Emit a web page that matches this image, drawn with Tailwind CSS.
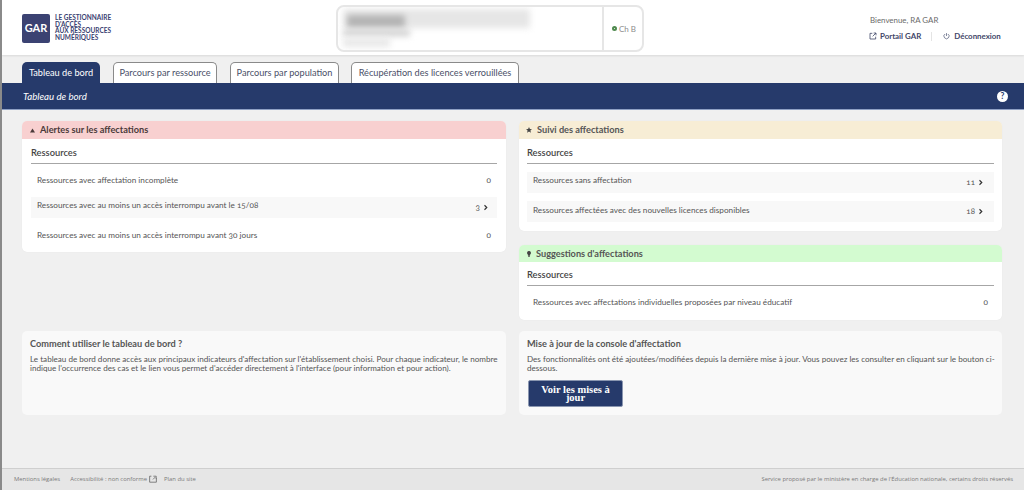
<!DOCTYPE html>
<html lang="fr">
<head>
    <meta charset="UTF-8">
    <title>Tableau de bord</title>
    <script src="https://cdn.jsdelivr.net/npm/@tailwindcss/browser@4"></script>
</head>
<body class="bg-[#f0f0f0] font-['Lato','Liberation_Sans',sans-serif] text-[#555] text-[8.2px] overflow-hidden">
<div class="h-[490px] flex flex-col border-l-2 border-[#8a8a8a] overflow-hidden">

    <!-- header -->
    <header class="h-[55px] shrink-0 bg-white flex items-start shadow-[0_1px_2px_rgba(0,0,0,0.1)] relative">
        <div class="w-[334px] shrink-0 pl-[20px] pt-[14px] flex items-start gap-[5px]">
            <div class="w-[28px] h-[29px] bg-[#3b4272] rounded-[2px] text-white text-[11px] font-bold flex items-center justify-center">GAR</div>
            <div class="text-[#3b4272] text-[6.5px] font-bold leading-[6.6px] pt-[1px]">LE GESTIONNAIRE<br>D'ACCÈS<br>AUX RESSOURCES<br>NUMÉRIQUES</div>
        </div>
        <div class="mt-[5px] w-[308px] h-[47px] border-2 border-[#e6e6e6] rounded-[8px] flex overflow-hidden">
            <div class="flex-1 relative overflow-hidden pl-[5px] pt-[2px]">
                <div class="w-[187px] h-[19px] bg-[#e6e6e6] blur-[3px] pl-[4px] pt-[6px]">
                    <div class="w-[58px] h-[13px] bg-[#b4b4b4]"></div>
                </div>
                <div class="w-[67px] h-[6px] mt-[2px] bg-[#cdcdcd] blur-[3px]"></div>
                <div class="w-[47px] h-[9px] mt-[2px] bg-[#e8e8e8] blur-[3px]"></div>
            </div>
            <div class="w-[40px] border-l-2 border-[#e6e6e6] flex items-center pl-[8px] gap-[2px] text-[#8c8c8c] text-[8px]">
                <span class="w-[5px] h-[5px] rounded-full border-2 border-[#4f8a4f]"></span>Ch B
            </div>
        </div>
        <div class="absolute left-[867px] top-[14px] w-[150px]">
            <div class="text-[#6a6a6a] text-[7.9px] leading-[12px] ml-[1px]">Bienvenue, RA GAR</div>
            <div class="mt-[4px] flex items-center text-[#3f4668] text-[7.9px] font-bold leading-[12px] whitespace-nowrap">
                <svg class="w-[8px] h-[8px] mr-[3px]" viewBox="0 0 12 12" fill="none" stroke="#3f4668" stroke-width="1.2"><path d="M5 2H1.5v8.5H10V7M7 1.5h3.5V5M10.5 1.5L5.5 6.5"/></svg>
                <span>Portail GAR</span>
                <span class="w-px h-[9px] bg-[#e4e4e4] ml-[10px] mr-[11px]"></span>
                <svg class="w-[7px] h-[8px] mr-[4px]" viewBox="0 0 12 12" fill="none" stroke="#3f4668" stroke-width="1.1"><path d="M3.5 2.6a4.4 4.4 0 1 0 5 0M6 1v5"/></svg>
                <span>Déconnexion</span>
            </div>
        </div>
    </header>

    <!-- tabs -->
    <nav class="h-[28px] shrink-0 flex items-end pl-[20px] gap-[13px] text-[9.2px] whitespace-nowrap">
        <a class="h-[21px] w-[78px] bg-[#263a6b] text-white rounded-t-[5px] flex items-center justify-center">Tableau de bord</a>
        <a class="h-[21px] w-[104px] bg-white text-[#4a5068] border border-b-0 border-[#8a8a8a] rounded-t-[5px] flex items-center justify-center">Parcours par ressource</a>
        <a class="h-[21px] w-[109px] bg-white text-[#4a5068] border border-b-0 border-[#8a8a8a] rounded-t-[5px] flex items-center justify-center">Parcours par population</a>
        <a class="h-[21px] w-[168px] -ml-px bg-white text-[#4a5068] border border-b-0 border-[#8a8a8a] rounded-t-[5px] flex items-center justify-center">Récupération des licences verrouillées</a>
    </nav>

    <!-- title bar -->
    <div class="h-[27px] shrink-0 bg-[#263a6b] border-b border-[#8fa0c4] flex items-center justify-between pl-[21px] pr-[16px] text-white text-[9.7px] italic">
        <span>Tableau de bord</span>
        <span class="w-[11px] h-[11px] rounded-full bg-white text-[#263a6b] text-[8.5px] not-italic font-bold flex items-center justify-center">?</span>
    </div>

    <!-- content -->
    <main class="flex-1 px-[20px] pt-[11px] grid grid-cols-[484px_483px] gap-x-[13px] content-start">
        <div class="h-[210px]">
            <section class="bg-white rounded-[5px] overflow-hidden shadow-[0_0_1px_rgba(0,0,0,0.08)]">
                <h2 class="h-[18px] bg-[#f8d0d0] flex items-center pl-[8px] gap-[5px] text-[9.2px] font-bold text-[#4a3a3a]">
                    <svg class="w-[5px] h-[5px]" viewBox="0 0 6 6" fill="#4a3a3a"><path d="M3 .5L6 5.5H0z"/></svg>Alertes sur les affectations
                </h2>
                <div class="px-[9px] pb-[4px]">
                    <h3 class="h-[25px] pt-[3px] border-b border-[#a6a6a6] flex items-center text-[9.3px] font-semibold text-[#444]">Ressources</h3>
                    <div class="mt-[8px] h-[21px] flex items-start justify-between pt-[2px] px-[6px]"><span>Ressources avec affectation incomplète</span><span class="oldstyle-nums">0</span></div>
                    <div class="mt-[4px] h-[21px] bg-[#f8f8f8] flex items-start justify-between pt-[2px] pl-[6px] pr-[8px]"><span class="oldstyle-nums">Ressources avec au moins un accès interrompu avant le 15/08</span><span class="oldstyle-nums flex items-center gap-[3px] pt-[2px]">3<svg class="w-[6px] h-[7px]" viewBox="0 0 8 8" fill="none" stroke="#333" stroke-width="1.6"><path d="M2 1l3 3-3 3"/></svg></span></div>
                    <div class="mt-[9px] h-[21px] flex items-start justify-between pt-[2px] px-[6px]"><span class="oldstyle-nums">Ressources avec au moins un accès interrompu avant 30 jours</span><span class="oldstyle-nums">0</span></div>
                </div>
            </section>
        </div>

        <div class="h-[210px]">
            <section class="bg-white rounded-[5px] overflow-hidden shadow-[0_0_1px_rgba(0,0,0,0.08)]">
                <h2 class="h-[18px] bg-[#f7edd5] flex items-center pl-[7px] gap-[5px] text-[9.2px] font-bold">
                    <svg class="w-[6px] h-[6px]" viewBox="0 0 10 10" fill="#444"><path d="M5 0l1.5 3.4 3.5.3-2.7 2.3.9 3.6L5 7.7 1.8 9.6l.9-3.6L0 3.7l3.5-.3z"/></svg>Suivi des affectations
                </h2>
                <div class="px-[8px] pb-[9px]">
                    <h3 class="h-[25px] pt-[3px] border-b border-[#a6a6a6] flex items-center text-[9.3px] font-semibold text-[#444]">Ressources</h3>
                    <div class="mt-[8px] h-[21px] bg-[#f8f8f8] flex items-start justify-between pt-[2px] pl-[6px] pr-[10px]"><span>Ressources sans affectation</span><span class="oldstyle-nums flex items-center gap-[3px] pt-[2px] text-[8px]">11<svg class="w-[6px] h-[7px]" viewBox="0 0 8 8" fill="none" stroke="#333" stroke-width="1.6"><path d="M2 1l3 3-3 3"/></svg></span></div>
                    <div class="mt-[8px] h-[21px] bg-[#f8f8f8] flex items-start justify-between pt-[3px] pl-[6px] pr-[10px]"><span>Ressources affectées avec des nouvelles licences disponibles</span><span class="oldstyle-nums flex items-center gap-[3px] pt-[1px] text-[8px]">18<svg class="w-[6px] h-[7px]" viewBox="0 0 8 8" fill="none" stroke="#333" stroke-width="1.6"><path d="M2 1l3 3-3 3"/></svg></span></div>
                </div>
            </section>
            <section class="mt-[14px] bg-white rounded-[5px] overflow-hidden shadow-[0_0_1px_rgba(0,0,0,0.08)]">
                <h2 class="h-[17px] bg-[#d3fbd0] flex items-center pl-[8px] gap-[5px] text-[9.2px] font-bold">
                    <svg class="w-[4px] h-[6px]" viewBox="0 0 6 9" fill="#444"><path d="M3 0a3 3 0 0 1 1.6 5.5V7h-3.2V5.5A3 3 0 0 1 3 0zM2 7.6h2V9H2z"/></svg>Suggestions d'affectations
                </h2>
                <div class="px-[8px] pb-[5px]">
                    <h3 class="h-[24px] pt-[3px] border-b border-[#a6a6a6] flex items-center text-[9.3px] font-semibold text-[#444]">Ressources</h3>
                    <div class="mt-[8px] h-[21px] flex items-start justify-between pt-[2px] px-[6px]"><span>Ressources avec affectations individuelles proposées par niveau éducatif</span><span class="oldstyle-nums">0</span></div>
                </div>
            </section>
        </div>

        <section class="h-[84px] bg-[#f9f9f9] rounded-[5px] px-[8px] pt-[6px]">
            <h4 class="text-[9.2px] font-bold leading-[13px]">Comment utiliser le tableau de bord ?</h4>
            <p class="mt-[5px] leading-[9px] text-[8.1px]">Le tableau de bord donne accès aux principaux indicateurs d'affectation sur l'établissement choisi. Pour chaque indicateur, le nombre indique l'occurrence des cas et le lien vous permet d'accéder directement à l'interface (pour information et pour action).</p>
        </section>
        <section class="h-[84px] bg-[#f9f9f9] rounded-[5px] px-[8px] pt-[6px]">
            <h4 class="text-[9.2px] font-bold leading-[13px]">Mise à jour de la console d'affectation</h4>
            <p class="mt-[5px] -mr-[3px] leading-[9px] text-[8.1px]">Des fonctionnalités ont été ajoutées/modifiées depuis la dernière mise à jour. Vous pouvez les consulter en cliquant sur le bouton ci-dessous.</p>
            <button class="mt-[7px] ml-[1px] block w-[95px] h-[27px] bg-[#263a6b] border border-[#8a96b0] rounded-[2px] text-white text-[10.5px] font-['Liberation_Serif',serif] font-bold leading-[8px] px-[10px]">Voir les mises à jour</button>
        </section>
    </main>

    <!-- footer -->
    <footer class="h-[22px] shrink-0 bg-[#e6e6e6] border-t border-[#cfcfcf] flex items-center justify-between pl-[12px] pr-[11px] text-[#7a7a7a] text-[5.9px] font-['Open_Sans',sans-serif]">
        <div class="flex items-center">
            <span>Mentions légales</span>
            <span class="ml-[10px]">Accessibilité : non conforme</span>
            <svg class="ml-[2px] w-[8px] h-[8px]" viewBox="0 0 10 10" fill="none" stroke="#666" stroke-width="1"><path d="M3 1.5H.8v7.5h8.4V4M5 5.5l3-3M5.5 1.5H9V5"/></svg>
            <span class="ml-[7px]">Plan du site</span>
        </div>
        <span>Service proposé par le ministère en charge de l'Éducation nationale, certains droits réservés</span>
    </footer>
</div>
</body>
</html>
